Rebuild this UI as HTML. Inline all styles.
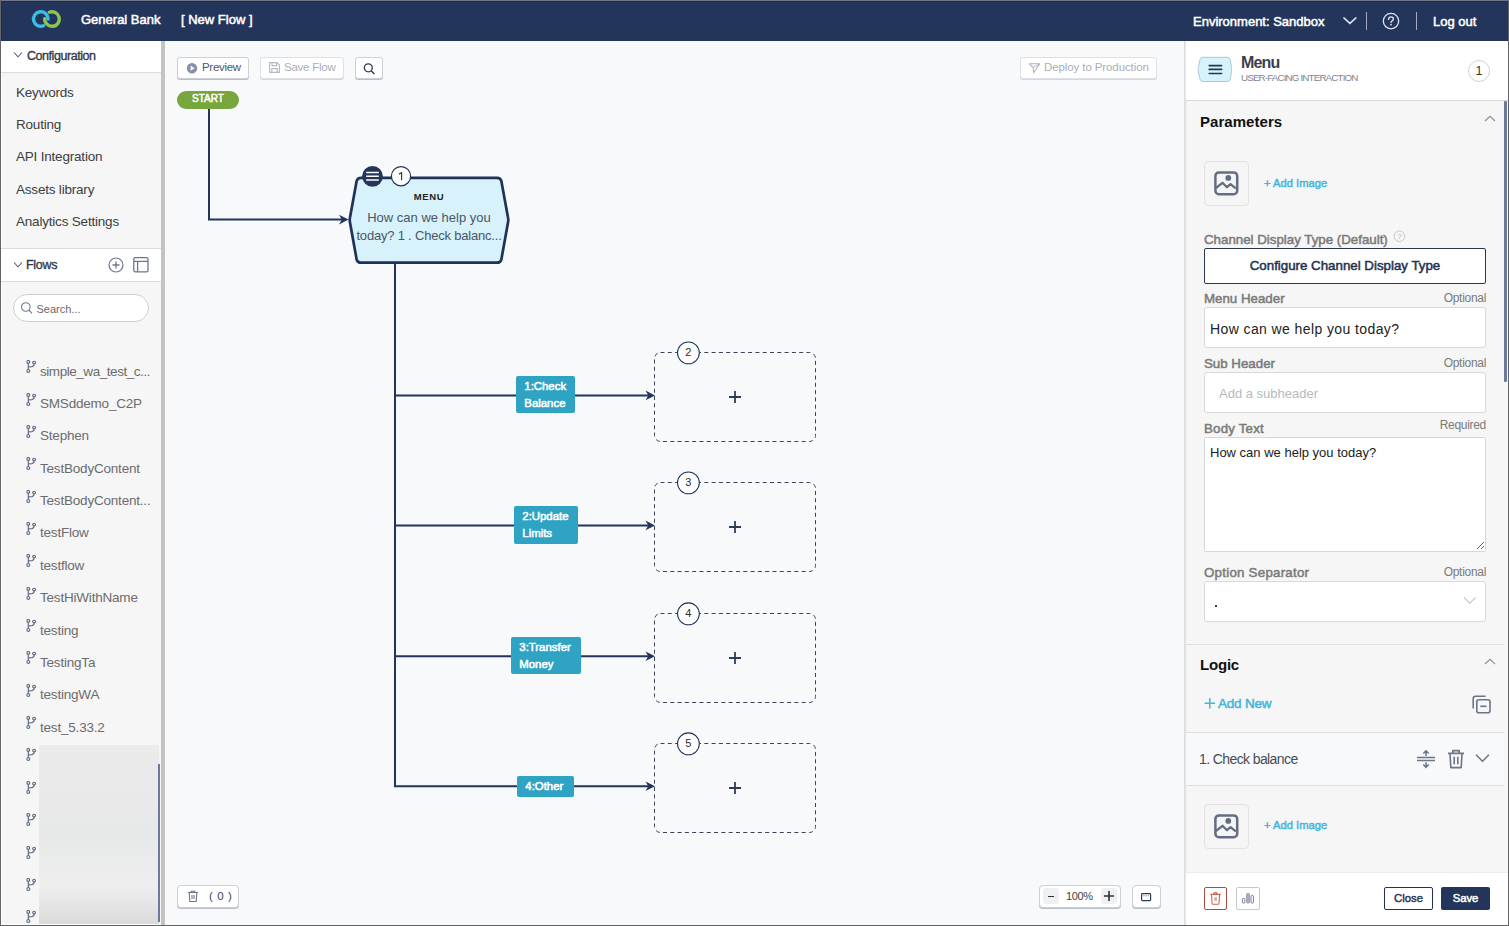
<!DOCTYPE html>
<html><head><meta charset="utf-8">
<style>
*{box-sizing:border-box;margin:0;padding:0}
html,body{width:1509px;height:926px;overflow:hidden;background:#fff}
body{font-family:"Liberation Sans",sans-serif;position:relative;color:#333}
.abs{position:absolute}
#frameT{left:0;top:0;width:1509px;height:1px;background:#6f7686}
#frameL{left:0;top:0;width:1px;height:926px;background:#646568}
#frameR{left:1508px;top:0;width:1px;height:926px;background:#646464}
#frameB{left:0;top:925px;width:1509px;height:1px;background:#626262}
#hdr{left:1px;top:1px;width:1507px;height:40px;background:#23355a;box-shadow:inset 1px 1px 0 #252d42}
.ht{color:#fff;font-size:13px;-webkit-text-stroke:0.5px #fff;white-space:nowrap}
#side{left:1px;top:41px;width:160px;height:884px;background:#f6f6f6;border-left:1px solid #fff;border-bottom:1px solid #fff}
#sbar{left:161px;top:41px;width:4px;height:884px;background:#c3c3c3}
#canvas{left:165px;top:41px;width:1019px;height:884px;background:#f7f9fb}
#rp{left:1184px;top:41px;width:324px;height:884px;background:#f6f6f6;border-left:1px solid #dcdcdc;box-shadow:inset 1px 0 0 #e6e6e6, inset 2px 0 0 #efefef}
.si{font-size:13.5px;color:#3d3d3d;white-space:nowrap;letter-spacing:-0.2px}
.fi{font-size:13.5px;color:#6c6c6c;white-space:nowrap;letter-spacing:-0.2px}
.btn{background:#fff;border:1px solid #cdd0d6;border-radius:3px;box-shadow:0 1px 0 #b9bec8}
.lbl{font-size:13.3px;color:#7a7a7a;-webkit-text-stroke:0.5px #7a7a7a;white-space:nowrap}
.opt{font-size:12px;color:#7a7a7a;white-space:nowrap;letter-spacing:-0.2px}
.inp{background:#fff;border:1px solid #d9d9d9;border-radius:3px}
</style></head><body>
<div id="frameT" class="abs"></div>
<div id="hdr" class="abs"></div>
<svg class="abs" style="left:0;top:0" width="70" height="41" viewBox="0 0 70 41"><path d="M43.53 25.77A7.3 7.3 0 1 1 48.10 19.00" fill="none" stroke="#3cbde6" stroke-width="3.4" stroke-linecap="round"/><path d="M49.27 12.23A7.3 7.3 0 1 1 44.70 18.75" fill="none" stroke="#8cc44f" stroke-width="3.4" stroke-linecap="round"/></svg>
<div class="abs ht" style="left:81px;top:12px">General Bank</div>
<div class="abs ht" style="left:181px;top:12px">[ New Flow ]</div>
<div class="abs ht" style="left:1193px;top:14px">Environment: Sandbox</div>
<svg class="abs" style="left:1340px;top:12px" width="20" height="16"><path d="M3.9 5.9L9.9 11.4L15.9 5.9" fill="none" stroke="#e0e6f2" stroke-width="1.5" stroke-linecap="round"/></svg>
<div class="abs" style="left:1366px;top:12px;width:1.2px;height:18px;background:#a3abbd"></div>
<svg class="abs" style="left:1380px;top:10px" width="22" height="22"><circle cx="11" cy="11.1" r="7.7" fill="none" stroke="#dde4f2" stroke-width="1.3"/><path d="M8.6 9.4Q8.6 6.9 11 6.9Q13.4 6.9 13.4 9.1Q13.4 10.5 11.9 11.1Q11 11.5 11 12.6" fill="none" stroke="#dde4f2" stroke-width="1.35" stroke-linecap="round"/><circle cx="11" cy="14.7" r="0.85" fill="#dde4f2"/></svg>
<div class="abs" style="left:1416px;top:12px;width:1.2px;height:18px;background:#a3abbd"></div>
<div class="abs ht" style="left:1433px;top:13.5px">Log out</div>
<div id="side" class="abs"></div>
<div class="abs" style="left:1px;top:41px;width:160px;height:32px;background:#fff;border-bottom:1px solid #dcdcdc"></div>
<svg class="abs" style="left:12px;top:50px" width="12" height="10"><path d="M2 2.5L6 6.8L10 2.5" fill="none" stroke="#555c69" stroke-width="1.1"/></svg>
<div class="abs" style="left:27px;top:48.5px;font-size:12.5px;line-height:14px;color:#2f3a4d;-webkit-text-stroke:0.35px #2f3a4d;letter-spacing:-0.45px;white-space:nowrap">Configuration</div>
<div class="abs si" style="left:16px;top:84.8px;line-height:15px">Keywords</div>
<div class="abs si" style="left:16px;top:117.1px;line-height:15px">Routing</div>
<div class="abs si" style="left:16px;top:149.4px;line-height:15px">API Integration</div>
<div class="abs si" style="left:16px;top:181.7px;line-height:15px">Assets library</div>
<div class="abs si" style="left:16px;top:214.0px;line-height:15px">Analytics Settings</div>
<div class="abs" style="left:1px;top:248px;width:160px;height:34px;background:#fff;border-top:1px solid #dcdcdc;border-bottom:1px solid #dcdcdc"></div>
<svg class="abs" style="left:12px;top:259.5px" width="12" height="10"><path d="M2 2.5L6 6.8L10 2.5" fill="none" stroke="#555c69" stroke-width="1.1"/></svg>
<div class="abs" style="left:26px;top:257.5px;font-size:12.5px;line-height:14px;color:#2f3a4d;-webkit-text-stroke:0.35px #2f3a4d;letter-spacing:-0.3px;white-space:nowrap">Flows</div>
<svg class="abs" style="left:106px;top:256px" width="20" height="18"><circle cx="10" cy="9" r="7" fill="none" stroke="#6b7890" stroke-width="1.2"/><path d="M10 5.5V12.5M6.5 9H13.5" stroke="#6b7890" stroke-width="1.3"/></svg>
<svg class="abs" style="left:132px;top:256px" width="18" height="18"><rect x="1.8" y="1.6" width="14.2" height="14.2" rx="1.6" fill="none" stroke="#6b7890" stroke-width="1.3"/><path d="M1.8 5.3H16M5.6 5.3V15.8" stroke="#6b7890" stroke-width="1.3"/></svg>
<div class="abs" style="left:13px;top:294px;width:136px;height:28px;border-radius:14px;background:#fff;border:1px solid #cfcfcf"></div>
<svg class="abs" style="left:19px;top:300px" width="16" height="16"><circle cx="6.8" cy="7" r="4.3" fill="none" stroke="#6b7890" stroke-width="1.1"/><path d="M9.9 10.2L13 13.3" stroke="#6b7890" stroke-width="1.2"/></svg>
<div class="abs" style="left:36.5px;top:301.5px;font-size:11px;line-height:14px;color:#676a70;white-space:nowrap;letter-spacing:0px">Search...</div>
<svg class="abs" style="left:26px;top:360.1px" width="12" height="13"><g fill="none" stroke="#5d6b82" stroke-width="1.15"><circle cx="2.3" cy="1.9" r="1.4"/><circle cx="2.3" cy="10.9" r="1.45"/><circle cx="8.1" cy="2.6" r="1.4"/><path d="M2.3 3.4V9.4M8.1 4.1Q8.1 6.3 6 6.6L2.3 6.9"/></g></svg>
<div class="abs fi" style="left:40px;top:363.6px;line-height:15px;letter-spacing:-0.45px">simple_wa_test_c...</div>
<svg class="abs" style="left:26px;top:392.5px" width="12" height="13"><g fill="none" stroke="#5d6b82" stroke-width="1.15"><circle cx="2.3" cy="1.9" r="1.4"/><circle cx="2.3" cy="10.9" r="1.45"/><circle cx="8.1" cy="2.6" r="1.4"/><path d="M2.3 3.4V9.4M8.1 4.1Q8.1 6.3 6 6.6L2.3 6.9"/></g></svg>
<div class="abs fi" style="left:40px;top:396.0px;line-height:15px;">SMSddemo_C2P</div>
<svg class="abs" style="left:26px;top:424.8px" width="12" height="13"><g fill="none" stroke="#5d6b82" stroke-width="1.15"><circle cx="2.3" cy="1.9" r="1.4"/><circle cx="2.3" cy="10.9" r="1.45"/><circle cx="8.1" cy="2.6" r="1.4"/><path d="M2.3 3.4V9.4M8.1 4.1Q8.1 6.3 6 6.6L2.3 6.9"/></g></svg>
<div class="abs fi" style="left:40px;top:428.3px;line-height:15px;">Stephen</div>
<svg class="abs" style="left:26px;top:457.2px" width="12" height="13"><g fill="none" stroke="#5d6b82" stroke-width="1.15"><circle cx="2.3" cy="1.9" r="1.4"/><circle cx="2.3" cy="10.9" r="1.45"/><circle cx="8.1" cy="2.6" r="1.4"/><path d="M2.3 3.4V9.4M8.1 4.1Q8.1 6.3 6 6.6L2.3 6.9"/></g></svg>
<div class="abs fi" style="left:40px;top:460.7px;line-height:15px;">TestBodyContent</div>
<svg class="abs" style="left:26px;top:489.5px" width="12" height="13"><g fill="none" stroke="#5d6b82" stroke-width="1.15"><circle cx="2.3" cy="1.9" r="1.4"/><circle cx="2.3" cy="10.9" r="1.45"/><circle cx="8.1" cy="2.6" r="1.4"/><path d="M2.3 3.4V9.4M8.1 4.1Q8.1 6.3 6 6.6L2.3 6.9"/></g></svg>
<div class="abs fi" style="left:40px;top:493.0px;line-height:15px;">TestBodyContent...</div>
<svg class="abs" style="left:26px;top:521.9px" width="12" height="13"><g fill="none" stroke="#5d6b82" stroke-width="1.15"><circle cx="2.3" cy="1.9" r="1.4"/><circle cx="2.3" cy="10.9" r="1.45"/><circle cx="8.1" cy="2.6" r="1.4"/><path d="M2.3 3.4V9.4M8.1 4.1Q8.1 6.3 6 6.6L2.3 6.9"/></g></svg>
<div class="abs fi" style="left:40px;top:525.4px;line-height:15px;">testFlow</div>
<svg class="abs" style="left:26px;top:554.3px" width="12" height="13"><g fill="none" stroke="#5d6b82" stroke-width="1.15"><circle cx="2.3" cy="1.9" r="1.4"/><circle cx="2.3" cy="10.9" r="1.45"/><circle cx="8.1" cy="2.6" r="1.4"/><path d="M2.3 3.4V9.4M8.1 4.1Q8.1 6.3 6 6.6L2.3 6.9"/></g></svg>
<div class="abs fi" style="left:40px;top:557.8px;line-height:15px;">testflow</div>
<svg class="abs" style="left:26px;top:586.6px" width="12" height="13"><g fill="none" stroke="#5d6b82" stroke-width="1.15"><circle cx="2.3" cy="1.9" r="1.4"/><circle cx="2.3" cy="10.9" r="1.45"/><circle cx="8.1" cy="2.6" r="1.4"/><path d="M2.3 3.4V9.4M8.1 4.1Q8.1 6.3 6 6.6L2.3 6.9"/></g></svg>
<div class="abs fi" style="left:40px;top:590.1px;line-height:15px;">TestHiWithName</div>
<svg class="abs" style="left:26px;top:619.0px" width="12" height="13"><g fill="none" stroke="#5d6b82" stroke-width="1.15"><circle cx="2.3" cy="1.9" r="1.4"/><circle cx="2.3" cy="10.9" r="1.45"/><circle cx="8.1" cy="2.6" r="1.4"/><path d="M2.3 3.4V9.4M8.1 4.1Q8.1 6.3 6 6.6L2.3 6.9"/></g></svg>
<div class="abs fi" style="left:40px;top:622.5px;line-height:15px;">testing</div>
<svg class="abs" style="left:26px;top:651.3px" width="12" height="13"><g fill="none" stroke="#5d6b82" stroke-width="1.15"><circle cx="2.3" cy="1.9" r="1.4"/><circle cx="2.3" cy="10.9" r="1.45"/><circle cx="8.1" cy="2.6" r="1.4"/><path d="M2.3 3.4V9.4M8.1 4.1Q8.1 6.3 6 6.6L2.3 6.9"/></g></svg>
<div class="abs fi" style="left:40px;top:654.8px;line-height:15px;">TestingTa</div>
<svg class="abs" style="left:26px;top:683.7px" width="12" height="13"><g fill="none" stroke="#5d6b82" stroke-width="1.15"><circle cx="2.3" cy="1.9" r="1.4"/><circle cx="2.3" cy="10.9" r="1.45"/><circle cx="8.1" cy="2.6" r="1.4"/><path d="M2.3 3.4V9.4M8.1 4.1Q8.1 6.3 6 6.6L2.3 6.9"/></g></svg>
<div class="abs fi" style="left:40px;top:687.2px;line-height:15px;">testingWA</div>
<svg class="abs" style="left:26px;top:716.1px" width="12" height="13"><g fill="none" stroke="#5d6b82" stroke-width="1.15"><circle cx="2.3" cy="1.9" r="1.4"/><circle cx="2.3" cy="10.9" r="1.45"/><circle cx="8.1" cy="2.6" r="1.4"/><path d="M2.3 3.4V9.4M8.1 4.1Q8.1 6.3 6 6.6L2.3 6.9"/></g></svg>
<div class="abs fi" style="left:40px;top:719.6px;line-height:15px;">test_5.33.2</div>
<svg class="abs" style="left:26px;top:748.4px" width="12" height="13"><g fill="none" stroke="#5d6b82" stroke-width="1.15"><circle cx="2.3" cy="1.9" r="1.4"/><circle cx="2.3" cy="10.9" r="1.45"/><circle cx="8.1" cy="2.6" r="1.4"/><path d="M2.3 3.4V9.4M8.1 4.1Q8.1 6.3 6 6.6L2.3 6.9"/></g></svg>
<svg class="abs" style="left:26px;top:780.8px" width="12" height="13"><g fill="none" stroke="#5d6b82" stroke-width="1.15"><circle cx="2.3" cy="1.9" r="1.4"/><circle cx="2.3" cy="10.9" r="1.45"/><circle cx="8.1" cy="2.6" r="1.4"/><path d="M2.3 3.4V9.4M8.1 4.1Q8.1 6.3 6 6.6L2.3 6.9"/></g></svg>
<svg class="abs" style="left:26px;top:813.1px" width="12" height="13"><g fill="none" stroke="#5d6b82" stroke-width="1.15"><circle cx="2.3" cy="1.9" r="1.4"/><circle cx="2.3" cy="10.9" r="1.45"/><circle cx="8.1" cy="2.6" r="1.4"/><path d="M2.3 3.4V9.4M8.1 4.1Q8.1 6.3 6 6.6L2.3 6.9"/></g></svg>
<svg class="abs" style="left:26px;top:845.5px" width="12" height="13"><g fill="none" stroke="#5d6b82" stroke-width="1.15"><circle cx="2.3" cy="1.9" r="1.4"/><circle cx="2.3" cy="10.9" r="1.45"/><circle cx="8.1" cy="2.6" r="1.4"/><path d="M2.3 3.4V9.4M8.1 4.1Q8.1 6.3 6 6.6L2.3 6.9"/></g></svg>
<svg class="abs" style="left:26px;top:877.9px" width="12" height="13"><g fill="none" stroke="#5d6b82" stroke-width="1.15"><circle cx="2.3" cy="1.9" r="1.4"/><circle cx="2.3" cy="10.9" r="1.45"/><circle cx="8.1" cy="2.6" r="1.4"/><path d="M2.3 3.4V9.4M8.1 4.1Q8.1 6.3 6 6.6L2.3 6.9"/></g></svg>
<svg class="abs" style="left:26px;top:910.2px" width="12" height="13"><g fill="none" stroke="#5d6b82" stroke-width="1.15"><circle cx="2.3" cy="1.9" r="1.4"/><circle cx="2.3" cy="10.9" r="1.45"/><circle cx="8.1" cy="2.6" r="1.4"/><path d="M2.3 3.4V9.4M8.1 4.1Q8.1 6.3 6 6.6L2.3 6.9"/></g></svg>
<div class="abs" style="left:39px;top:745px;width:120px;height:179px;background:linear-gradient(180deg,#ebebeb 0%,#e7e8e8 50%,#eeeeee 80%,#dadada 100%)"></div>
<div class="abs" style="left:158px;top:764px;width:2px;height:158px;background:#6b7a99"></div>
<div id="sbar" class="abs"></div>
<div id="canvas" class="abs"></div>
<div class="abs btn" style="left:177px;top:57px;width:72px;height:22px"></div>
<svg class="abs" style="left:186px;top:62px" width="12" height="12"><circle cx="6" cy="6.2" r="5.2" fill="#8590a6"/><path d="M4.6 3.6L8.6 6.2L4.6 8.8Z" fill="#fff"/></svg>
<div class="abs" style="left:202px;top:60px;font-size:11.5px;line-height:14px;color:#4f5767;letter-spacing:-0.3px;white-space:nowrap">Preview</div>
<div class="abs btn" style="left:260px;top:57px;width:84px;height:22px;border-color:#dde0e6;box-shadow:0 1px 0 #d3d7de"></div>
<svg class="abs" style="left:268px;top:61px" width="13" height="13"><path d="M1.6 1.6H9L11.4 4V11.4H1.6Z" fill="none" stroke="#b3b8c2" stroke-width="1.1" stroke-linejoin="round"/><path d="M4 1.6V4.6H8.6V1.6M3.8 11.4V7.6H9.2V11.4" fill="none" stroke="#b3b8c2" stroke-width="1.1"/></svg>
<div class="abs" style="left:284px;top:60px;font-size:11.5px;line-height:14px;color:#a9aeb7;letter-spacing:-0.25px;white-space:nowrap">Save Flow</div>
<div class="abs btn" style="left:355px;top:57px;width:28px;height:22px"></div>
<svg class="abs" style="left:361px;top:61px" width="16" height="15"><circle cx="7.3" cy="6.8" r="4" fill="none" stroke="#2f3b52" stroke-width="1.3"/><path d="M10.2 9.7L13.4 12.9" stroke="#2f3b52" stroke-width="1.4"/></svg>
<div class="abs btn" style="left:1020px;top:57px;width:137px;height:22px;border-color:#dde0e6;box-shadow:0 1px 0 #d3d7de"></div>
<svg class="abs" style="left:1028px;top:62px" width="13" height="12"><path d="M1.5 1.8L11.8 1.8L5.6 10.8L5.2 5.6Z" fill="none" stroke="#b0b5bf" stroke-width="1.1" stroke-linejoin="round"/><path d="M5.2 5.6L11.8 1.8" stroke="#b0b5bf" stroke-width="1"/></svg>
<div class="abs" style="left:1044px;top:60px;font-size:11.5px;line-height:14px;color:#a9aeb7;letter-spacing:-0.1px;white-space:nowrap">Deploy to Production</div>
<div class="abs" style="left:177px;top:91px;width:62px;height:18px;border-radius:9px;background:#77a63c"></div>
<div class="abs" style="left:177px;top:92px;width:62px;text-align:center;font-size:10px;line-height:13px;color:#fff;-webkit-text-stroke:0.5px #fff">START</div>
<svg class="abs" style="left:165px;top:41px" width="1020" height="883" viewBox="165 41 1020 883">
<g fill="none" stroke="#23355a" stroke-width="2">
<path d="M209 109V219.6H346"/>
<path d="M395 263V786.3"/>
<path d="M394 395.4H652"/>
<path d="M394 525.4H652"/>
<path d="M394 656.2H652"/>
<path d="M394 786.3H652"/>
</g>
<g fill="#23355a">
<path d="M348.5 219.6L339 214.8L341.8 219.6L339 224.4Z"/>
<path d="M655 395.4L645.5 390.6L648.3 395.4L645.5 400.2Z"/>
<path d="M655 525.4L645.5 520.6L648.3 525.4L645.5 530.2Z"/>
<path d="M655 656.2L645.5 651.4L648.3 656.2L645.5 661Z"/>
<path d="M655 786.3L645.5 781.5L648.3 786.3L645.5 791.1Z"/>
</g>
<path d="M361 177.8H497 Q500.5 177.8 501.4 181.2L508 217.5Q508.6 220 508 222.5L501.4 259.3Q500.5 262.7 497 262.7H361Q357.5 262.7 356.6 259.3L350 222.5Q349.4 220 350 217.5L356.6 181.2Q357.5 177.8 361 177.8Z" fill="#d7f2fb" stroke="#1f3358" stroke-width="2.7" stroke-linejoin="round"/>
<circle cx="372.5" cy="176.3" r="10.4" fill="#23355a"/>
<path d="M366.2 172.4H378.8M366.2 176.2H378.8M366.2 180H378.8" stroke="#fff" stroke-width="1.5"/>
<circle cx="401" cy="176.2" r="9.6" fill="#fff" stroke="#23355a" stroke-width="1.2"/>
<rect x="654.5" y="352.5" width="161" height="89" rx="6" fill="none" stroke="#3b4456" stroke-width="1" stroke-dasharray="4 3.3"/>
<circle cx="688.4" cy="352.8" r="10.9" fill="#fff" stroke="#23355a" stroke-width="1.05"/>
<path d="M735 391.0V403.0M729 397.0H741" stroke="#2d3b55" stroke-width="1.8"/>
<rect x="654.5" y="482.5" width="161" height="89" rx="6" fill="none" stroke="#3b4456" stroke-width="1" stroke-dasharray="4 3.3"/>
<circle cx="688.4" cy="482.8" r="10.9" fill="#fff" stroke="#23355a" stroke-width="1.05"/>
<path d="M735 521.0V533.0M729 527.0H741" stroke="#2d3b55" stroke-width="1.8"/>
<rect x="654.5" y="613.5" width="161" height="89" rx="6" fill="none" stroke="#3b4456" stroke-width="1" stroke-dasharray="4 3.3"/>
<circle cx="688.4" cy="613.8" r="10.9" fill="#fff" stroke="#23355a" stroke-width="1.05"/>
<path d="M735 652.0V664.0M729 658.0H741" stroke="#2d3b55" stroke-width="1.8"/>
<rect x="654.5" y="743.5" width="161" height="89" rx="6" fill="none" stroke="#3b4456" stroke-width="1" stroke-dasharray="4 3.3"/>
<circle cx="688.4" cy="743.8" r="10.9" fill="#fff" stroke="#23355a" stroke-width="1.05"/>
<path d="M735 782.0V794.0M729 788.0H741" stroke="#2d3b55" stroke-width="1.8"/>
</svg>
<svg class="abs" style="left:394px;top:169px" width="14" height="14"><path d="M7.6 3V11.2M7.6 3.2Q6.6 4.6 4.9 5.1" fill="none" stroke="#2b2b2b" stroke-width="1.1"/></svg>
<div class="abs" style="left:349px;top:191px;width:160px;text-align:center;font-size:9.5px;line-height:11px;font-weight:bold;color:#222;letter-spacing:0.6px">MENU</div>
<div class="abs" style="left:349px;top:209px;width:160px;text-align:center;font-size:13px;line-height:18px;color:#4a5666;white-space:nowrap">How can we help you<br><span style="letter-spacing:-0.2px">today? 1 . Check balanc...</span></div>
<div class="abs" style="left:638.4px;top:343.0px;width:100px;text-align:center;font-size:11px;line-height:18px;color:#2b2b2b">2</div>
<div class="abs" style="left:638.4px;top:473.1px;width:100px;text-align:center;font-size:11px;line-height:18px;color:#2b2b2b">3</div>
<div class="abs" style="left:638.4px;top:604.0px;width:100px;text-align:center;font-size:11px;line-height:18px;color:#2b2b2b">4</div>
<div class="abs" style="left:638.4px;top:734.4px;width:100px;text-align:center;font-size:11px;line-height:18px;color:#2b2b2b">5</div>
<div class="abs" style="left:516px;top:376px;width:59px;height:37px;background:#2ea3c4;border-radius:2px;color:#fff;font-size:11.4px;line-height:17px;padding:2px 0 0 8.3px;-webkit-text-stroke:0.55px #fff;white-space:nowrap">1:Check<br>Balance</div>
<div class="abs" style="left:514px;top:506px;width:64px;height:38px;background:#2ea3c4;border-radius:2px;color:#fff;font-size:11.4px;line-height:17px;padding:2px 0 0 8.3px;-webkit-text-stroke:0.55px #fff;white-space:nowrap">2:Update<br>Limits</div>
<div class="abs" style="left:511px;top:637px;width:70px;height:37px;background:#2ea3c4;border-radius:2px;color:#fff;font-size:11.4px;line-height:17px;padding:2px 0 0 8.3px;-webkit-text-stroke:0.55px #fff;white-space:nowrap">3:Transfer<br>Money</div>
<div class="abs" style="left:517px;top:775.5px;width:57px;height:21.5px;background:#2ea3c4;border-radius:2px;color:#fff;font-size:11.4px;line-height:17px;padding:2px 0 0 8.3px;-webkit-text-stroke:0.55px #fff;white-space:nowrap">4:Other</div>
<div class="abs btn" style="left:177px;top:885px;width:62px;height:23px;border-radius:4px"></div>
<svg class="abs" style="left:186px;top:889px" width="14" height="14"><path d="M2 3.5H12M5.2 3.5V2.2H8.8V3.5M3.2 3.5L3.8 12.4H10.2L10.8 3.5M6 6V10M8 6V10" fill="none" stroke="#6b7489" stroke-width="1.05"/></svg>
<div class="abs" style="left:209px;top:889px;font-size:11.5px;line-height:14px;color:#3b4456;white-space:nowrap;letter-spacing:0.6px">( 0 )</div>
<div class="abs btn" style="left:1039px;top:885px;width:82px;height:23px;border-radius:4px"></div>
<div class="abs" style="left:1043px;top:888px;width:16px;height:16px;border-radius:3px;background:#eef0f4"></div>
<div class="abs" style="left:1101px;top:888px;width:16px;height:16px;border-radius:3px;background:#eef0f4"></div>
<div class="abs" style="left:1048px;top:896px;width:5.5px;height:1.3px;background:#333"></div>
<svg class="abs" style="left:1102px;top:889px" width="14" height="14"><path d="M7 2V12M2 7H12" stroke="#333" stroke-width="1.6"/></svg>
<div class="abs" style="left:1066px;top:889px;font-size:11px;line-height:14px;color:#444;white-space:nowrap;letter-spacing:-0.35px">100%</div>
<div class="abs btn" style="left:1132px;top:885px;width:29px;height:23px;border-radius:4px"></div>
<svg class="abs" style="left:1139px;top:891px" width="14" height="12"><rect x="2.6" y="2.6" width="9" height="7" rx="0.8" fill="none" stroke="#2d3b55" stroke-width="1.2"/><path d="M4.4 4.8H5.4M6.6 4.8H7.6M8.8 4.8H9.8" stroke="#2d3b55" stroke-width="0.8"/></svg>
<div id="rp" class="abs"></div>
<div class="abs" style="left:1186px;top:41px;width:322px;height:60px;background:#fff;border-bottom:1px solid #dcdcdc"></div>
<svg class="abs" style="left:1196px;top:55px" width="40" height="30"><path d="M7 2.3H31.2Q33.6 2.3 34.2 4.6L35.5 12.2Q35.8 14.4 35.5 16.6L34.2 24.2Q33.6 26.5 31.2 26.5H7Q4.6 26.5 4 24.2L2.3 16.6Q2 14.4 2.3 12.2L4 4.6Q4.6 2.3 7 2.3Z" fill="#d6f2fb" stroke="#a9c3cd" stroke-width="0.9"/><path d="M13.2 10.6H25.6M13.2 14.4H25.6M13.2 18.5H25.6" stroke="#23354f" stroke-width="1.6" stroke-linecap="round"/></svg>
<div class="abs" style="left:1241px;top:54px;font-size:16px;line-height:18px;font-weight:bold;color:#3a3f4b;letter-spacing:-0.85px;white-space:nowrap">Menu</div>
<div class="abs" style="left:1241px;top:72px;font-size:9.8px;line-height:12px;color:#80858f;letter-spacing:-0.85px;white-space:nowrap">USER-FACING INTERACTION</div>
<div class="abs" style="left:1468px;top:60px;width:22px;height:22px;border-radius:50%;border:1px solid #cfd2d6;background:#fff;text-align:center;font-size:12.5px;line-height:20px;color:#333">1</div>
<div class="abs" style="left:1200px;top:113px;font-size:15px;line-height:17px;font-weight:bold;color:#111;letter-spacing:0.05px;white-space:nowrap">Parameters</div>
<svg class="abs" style="left:1483px;top:113px" width="14" height="12"><path d="M2 8L7 3.3L12 8" fill="none" stroke="#8a8f99" stroke-width="1.1"/></svg>
<div class="abs" style="left:1204px;top:161px;width:45px;height:45px;border:1px solid #e3e3e3;border-radius:4px;background:#f5f5f5"></div>
<svg class="abs" style="left:1213px;top:170px" width="26" height="26"><rect x="2.4" y="2.4" width="21.8" height="21.8" rx="3.5" fill="none" stroke="#646d80" stroke-width="2.5"/><circle cx="15.3" cy="7.9" r="2.9" fill="#646d80"/><path d="M2.8 18.2L9.5 12.8L14 17.2L17.5 14.2L22.8 18.4" fill="none" stroke="#646d80" stroke-width="2.3" stroke-linejoin="round"/></svg>
<div class="abs" style="left:1264px;top:176px;font-size:11.2px;line-height:14px;color:#44b4df;-webkit-text-stroke:0.45px #44b4df;white-space:nowrap">+ Add Image</div>
<div class="abs lbl" style="left:1204px;top:232px;line-height:15px">Channel Display Type (Default)</div>
<svg class="abs" style="left:1393px;top:230px" width="13" height="13"><circle cx="6.5" cy="6.3" r="5.3" fill="none" stroke="#c2c2c2" stroke-width="0.9"/><text x="6.5" y="9.4" text-anchor="middle" font-family="Liberation Sans" font-size="8" fill="#b9b9b9">?</text></svg>
<div class="abs" style="left:1204px;top:248px;width:282px;height:36px;border:1.5px solid #2a3650;border-radius:2px;background:#fff;text-align:center;font-size:13.3px;line-height:33px;color:#24324f;-webkit-text-stroke:0.5px #24324f;white-space:nowrap">Configure Channel Display Type</div>
<div class="abs lbl" style="left:1204px;top:291px;line-height:15px">Menu Header</div>
<div class="abs opt" style="left:1386px;top:291px;width:100px;text-align:right;line-height:14px;letter-spacing:-0.3px">Optional</div>
<div class="abs inp" style="left:1204px;top:307px;width:282px;height:41px"></div>
<div class="abs" style="left:1210px;top:321px;font-size:14px;line-height:16px;color:#222;letter-spacing:0.4px;white-space:nowrap">How can we help you today?</div>
<div class="abs lbl" style="left:1204px;top:356px;line-height:15px">Sub Header</div>
<div class="abs opt" style="left:1386px;top:356px;width:100px;text-align:right;line-height:14px;letter-spacing:-0.3px">Optional</div>
<div class="abs inp" style="left:1204px;top:372px;width:282px;height:41px"></div>
<div class="abs" style="left:1219px;top:386px;font-size:13px;line-height:15px;color:#b8b8b8;white-space:nowrap">Add a subheader</div>
<div class="abs lbl" style="left:1204px;top:421px;line-height:15px;letter-spacing:0.2px">Body Text</div>
<div class="abs opt" style="left:1386px;top:418px;width:100px;text-align:right;line-height:14px;letter-spacing:-0.3px">Required</div>
<div class="abs inp" style="left:1204px;top:437px;width:282px;height:115px;border-color:#d3d8de;border-radius:1.5px"></div>
<svg class="abs" style="left:1475px;top:540px" width="10" height="10"><path d="M9 2L2 9M9 6L6 9" stroke="#555" stroke-width="0.9"/></svg>
<div class="abs" style="left:1210px;top:445px;font-size:13px;line-height:15px;color:#1a1a1a;white-space:nowrap">How can we help you today?</div>
<div class="abs lbl" style="left:1204px;top:565px;line-height:15px;letter-spacing:0.25px">Option Separator</div>
<div class="abs opt" style="left:1386px;top:565px;width:100px;text-align:right;line-height:14px;letter-spacing:-0.3px">Optional</div>
<div class="abs inp" style="left:1204px;top:581px;width:282px;height:41px"></div>
<div class="abs" style="left:1215px;top:605px;width:2px;height:2px;background:#444"></div>
<svg class="abs" style="left:1462px;top:595px" width="16" height="12"><path d="M2 2.5L7.8 8.2L13.6 2.5" fill="none" stroke="#c5c8cc" stroke-width="1.2"/></svg>
<div class="abs" style="left:1186px;top:644px;width:318px;height:1px;background:#dedede"></div>
<div class="abs" style="left:1200px;top:656px;font-size:15px;line-height:17px;font-weight:bold;color:#111;letter-spacing:-0.2px;white-space:nowrap">Logic</div>
<svg class="abs" style="left:1483px;top:656px" width="14" height="12"><path d="M2 8L7 3.3L12 8" fill="none" stroke="#8a8f99" stroke-width="1.1"/></svg>
<svg class="abs" style="left:1203px;top:696px" width="14" height="14"><path d="M6.8 2V12.4M1.6 7.2H12" stroke="#44b4df" stroke-width="1.5"/></svg>
<div class="abs" style="left:1218px;top:696px;font-size:13.5px;line-height:16px;color:#44b4df;-webkit-text-stroke:0.5px #44b4df;letter-spacing:-0.2px;white-space:nowrap">Add New</div>
<svg class="abs" style="left:1471px;top:694px" width="22" height="21"><path d="M2.2 14.4V4.6Q2.2 2.2 4.6 2.2H14.6" fill="none" stroke="#6b7489" stroke-width="1.6"/><rect x="5.8" y="5.8" width="13.2" height="13" rx="2" fill="none" stroke="#6b7489" stroke-width="1.6"/><path d="M9.3 12.3H15.5" stroke="#6b7489" stroke-width="1.6"/></svg>
<div class="abs" style="left:1186px;top:732px;width:318px;height:54px;background:#f8f9fa;border-top:1px solid #dedede;border-bottom:1px solid #dedede"></div>
<div class="abs" style="left:1199px;top:751px;font-size:14px;line-height:16px;color:#474c55;letter-spacing:-0.6px;white-space:nowrap">1. Check balance</div>
<svg class="abs" style="left:1415px;top:748px" width="22" height="22"><path d="M2 9.6H20M2 12.6H20M11 3V8M11 14.2V19.2M8.3 5.6L11 2.8L13.7 5.6M8.3 16.6L11 19.4L13.7 16.6" fill="none" stroke="#6b7489" stroke-width="1.5"/></svg>
<svg class="abs" style="left:1446px;top:748px" width="20" height="22"><path d="M2 5.4H18M6.8 5.4V2.6H13.2V5.4M4 5.4L4.8 19.6H15.2L16 5.4M8.2 8.8V16.2M11.8 8.8V16.2" fill="none" stroke="#6b7489" stroke-width="1.6" stroke-linejoin="round"/></svg>
<svg class="abs" style="left:1474px;top:752px" width="17" height="12"><path d="M2 2.8L8.5 9.2L15 2.8" fill="none" stroke="#6b7489" stroke-width="1.5"/></svg>
<div class="abs" style="left:1204px;top:804px;width:45px;height:45px;border:1px solid #e3e3e3;border-radius:4px;background:#f5f5f5"></div>
<svg class="abs" style="left:1213px;top:813px" width="26" height="26"><rect x="2.4" y="2.4" width="21.8" height="21.8" rx="3.5" fill="none" stroke="#646d80" stroke-width="2.5"/><circle cx="15.3" cy="7.9" r="2.9" fill="#646d80"/><path d="M2.8 18.2L9.5 12.8L14 17.2L17.5 14.2L22.8 18.4" fill="none" stroke="#646d80" stroke-width="2.3" stroke-linejoin="round"/></svg>
<div class="abs" style="left:1264px;top:818px;font-size:11.2px;line-height:14px;color:#44b4df;-webkit-text-stroke:0.45px #44b4df;white-space:nowrap">+ Add Image</div>
<div class="abs" style="left:1186px;top:872px;width:322px;height:53px;background:#fff;border-top:1px solid #ececec"></div>
<div class="abs" style="left:1204px;top:887px;width:23px;height:23px;border:1.3px solid #a84e3a;border-radius:2px"></div>
<svg class="abs" style="left:1208px;top:891px" width="15" height="15"><path d="M2.3 3.4H12.8M5.6 3.2Q5.6 1.6 7.55 1.6Q9.5 1.6 9.5 3.2M3.5 3.6L4.1 12.4Q4.2 13.2 5 13.2H10.1Q10.9 13.2 11 12.4L11.6 3.6" fill="none" stroke="#c46a52" stroke-width="1.1"/><rect x="6.2" y="6.2" width="2.8" height="3.6" fill="#e2a898"/></svg>
<div class="abs" style="left:1236px;top:887px;width:24px;height:23px;border:1px solid #c5c9cf;border-radius:2px"></div>
<svg class="abs" style="left:1240px;top:891px" width="16" height="15"><rect x="2.4" y="7.6" width="2.4" height="4.4" rx="0.6" fill="none" stroke="#6b7489" stroke-width="0.9"/><rect x="6.6" y="2.4" width="2.8" height="9.6" rx="1" fill="#aeb4c0" stroke="#8a92a2" stroke-width="0.9"/><rect x="11" y="4.6" width="2.4" height="7.4" rx="0.6" fill="none" stroke="#6b7489" stroke-width="0.9"/></svg>
<div class="abs" style="left:1384px;top:887px;width:49px;height:23px;border:1.5px solid #24324f;border-radius:2px;text-align:center;font-size:11.3px;line-height:20px;color:#2d3650;-webkit-text-stroke:0.45px #2d3650">Close</div>
<div class="abs" style="left:1441px;top:887px;width:49px;height:23px;background:#23355a;border-radius:2px;text-align:center;font-size:11.3px;line-height:23px;color:#fff;-webkit-text-stroke:0.5px #fff">Save</div>
<div class="abs" style="left:1504px;top:101px;width:3px;height:281px;background:#6b7a99;border-radius:1px"></div>
<div id="frameL" class="abs"></div>
<div id="frameR" class="abs"></div>
<div id="frameB" class="abs"></div>
</body></html>
